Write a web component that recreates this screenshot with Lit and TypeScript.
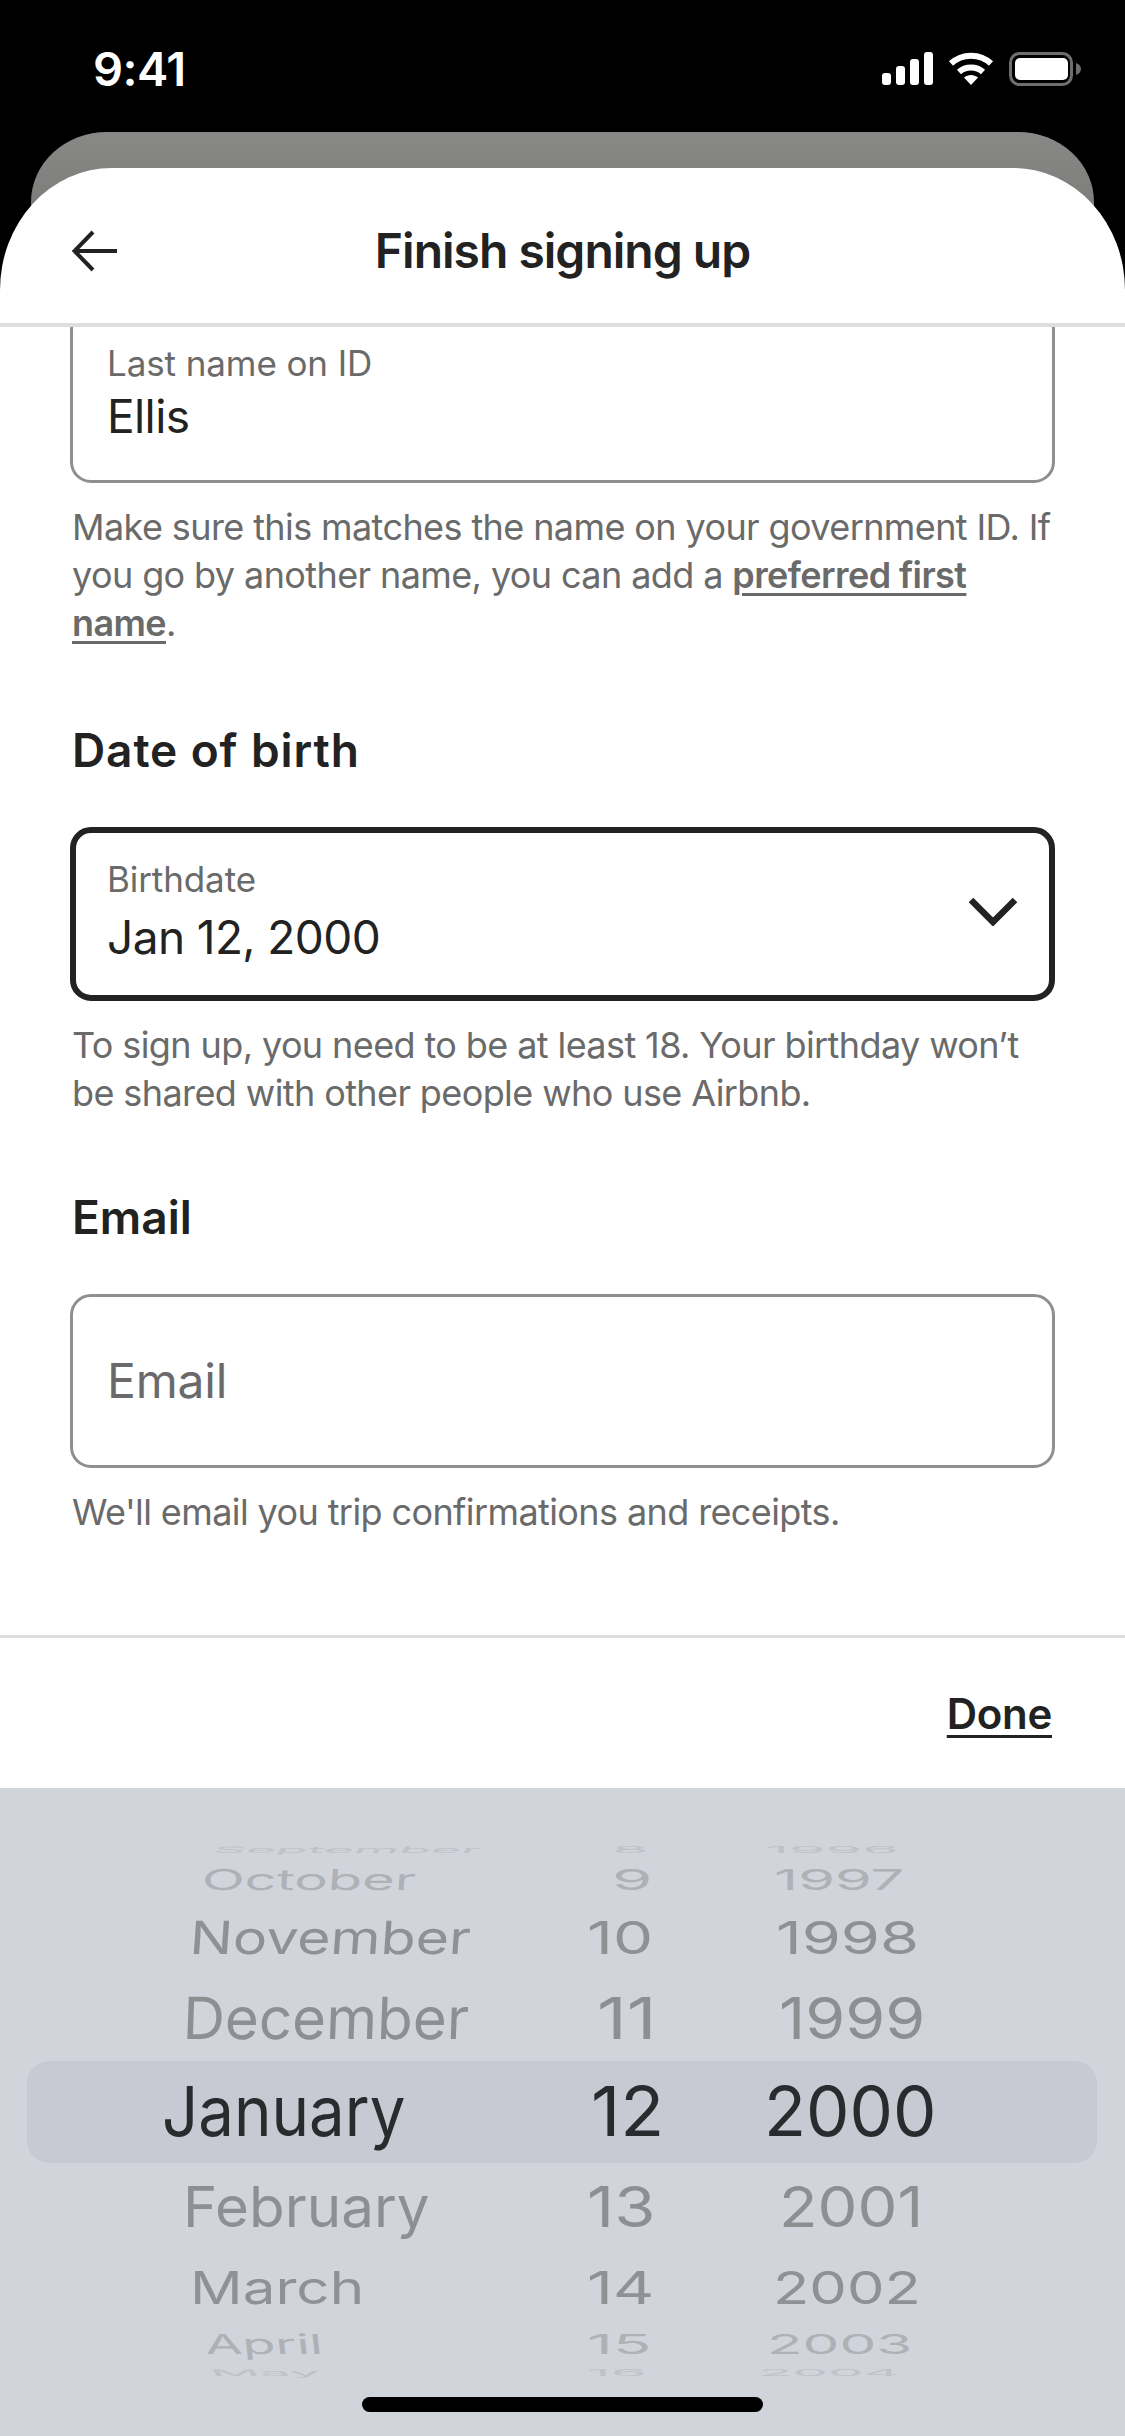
import { LitElement, html, css, svg } from "lit";
import { customElement } from "lit/decorators.js";

type Cell = [string, number, number];
interface Row { h: number; sy: number; skew: number; color: string; cells: Cell[]; }

const COLS = [0, 560, 740];
const ROWS: Row[] = [
  { h: 28, sy: 0.13, skew: -30, color: "#bfc2c8", cells: [["September", 213, 265], ["8", 613, 30], ["1996", 766, 128]] },
  { h: 29, sy: 0.42, skew: -4, color: "#aeb1b6", cells: [["October", 203, 210], ["9", 614, 33], ["1997", 775, 125]] },
  { h: 87, sy: 0.66, skew: -4, color: "#8f9195", cells: [["November", 193, 275], ["10", 588, 60], ["1998", 777, 137]] },
  { h: 76, sy: 0.84, skew: -2, color: "#8d8f93", cells: [["December", 186, 280], ["11", 598, 50], ["1999", 780, 140]] },
  { h: 110, sy: 1, skew: 0, color: "#2a2b2f", cells: [["January", 163, 239], ["12", 592, 66], ["2000", 767, 164]] },
  { h: 79, sy: 0.82, skew: 0, color: "#8d8f93", cells: [["February", 186, 240], ["13", 588, 62], ["2001", 782, 134]] },
  { h: 83, sy: 0.66, skew: 0, color: "#8f9195", cells: [["March", 193, 165], ["14", 588, 61], ["2002", 775, 140]] },
  { h: 32, sy: 0.4, skew: 6, color: "#aeb1b6", cells: [["April", 204, 113], ["15", 588, 58], ["2003", 769, 138]] },
  { h: 26, sy: 0.13, skew: 30, color: "#bfc2c8", cells: [["May", 213, 104], ["16", 588, 54], ["2004", 760, 135]] },
];

const ctx = document.createElement("canvas").getContext("2d")!;
function ink(t: string) {
  ctx.font = '400 69px Inter';
  const m = ctx.measureText(t);
  return { left: m.actualBoundingBoxLeft, width: m.actualBoundingBoxLeft + m.actualBoundingBoxRight };
}

@customElement("app-root")
export class AppRoot extends LitElement {
  static styles = css`
    :host { display: flex; flex-direction: column; width: 1125px; height: 2436px; background: #000; overflow: hidden;
      font-family: Inter, "Liberation Sans", sans-serif; color: #222; }
    .status { height: 132px; flex: none; display: flex; justify-content: space-between; align-items: flex-start; padding: 42px 44px 0 93px; box-sizing: border-box; }
    .time { color: #fff; font-size: 47px; font-weight: 600; line-height: 54px; letter-spacing: -0.5px; }
    .status-icons { display: flex; gap: 15px; padding-top: 10px; align-items: flex-start; }
    .status-icons svg { display: block; }
    .back { flex: none; height: 80px; margin: 0 31px -44px; border-radius: 76px 76px 0 0 / 70px 70px 0 0; background: linear-gradient(#888887, #7c7c7b); }
    .sheet { flex: 1; min-height: 0; display: flex; flex-direction: column; background: #fff; border-radius: 112px 112px 0 0 / 122px 122px 0 0; position: relative; }
    .header { flex: none; height: 155px; box-sizing: content-box; border-bottom: 4px solid #dedede; display: flex; align-items: center; justify-content: center; position: relative; }
    .title { font-size: 48px; font-weight: 600; letter-spacing: -1px; line-height: 56px; margin-top: 10px; }
    .arrow { position: absolute; left: 72px; top: 62px; display: block; }
    .body { flex: 1; min-height: 0; overflow: hidden; padding: 0 70px; display: flex; flex-direction: column; }
    .field { flex: none; height: 174px; box-sizing: border-box; border: 3px solid #8f8f8f; border-radius: 21px; padding: 0 34px; display: flex; flex-direction: column; position: relative; }
    .field.clip { margin-top: -18px; }
    .field.focus { border: 6px solid #222; padding: 0 31px; }
    .label { font-size: 35px; line-height: 40px; color: #6a6a6a; margin-top: 31px; letter-spacing: -0.1px; }
    .focus .label { margin-top: 26px; }
    .value { font-size: 46px; line-height: 56px; color: #222; margin-top: 5px; letter-spacing: -0.6px; }
    .focus .value { margin-top: 10px; }
    .placeholder { font-size: 48px; line-height: 167px; color: #6a6a6a; letter-spacing: -0.2px; }
    .chev { position: absolute; right: 31px; top: 63px; display: block; }
    .help { font-size: 36px; line-height: 48px; color: #6a6a6a; margin: 20px 0 0 2px; letter-spacing: -0.6px; }
    .help a { color: #6a6a6a; font-weight: 600; text-decoration: underline; text-underline-offset: 5px; text-decoration-thickness: 3px; }
    .heading { font-size: 46px; font-weight: 600; line-height: 56px; margin: 75px 0 49px 2px; letter-spacing: 0.9px; color: #222; }
    .heading.tight { margin: 72px 0 49px 2px; letter-spacing: 0; }
    .footer { flex: none; height: 153px; border-top: 3px solid #dedede; display: flex; justify-content: flex-end; align-items: center; padding: 0 73px 0 0; box-sizing: border-box; background: #fff; }
    .done { font-size: 42px; font-weight: 600; letter-spacing: -0.3px; text-decoration: underline; text-underline-offset: 6px; text-decoration-thickness: 3px; color: #222; }
    .picker { flex: none; height: 648px; background: #d1d4db; box-sizing: border-box; padding-top: 48px; position: relative; display: flex; flex-direction: column; }
    .band { position: absolute; left: 27px; width: 1070px; top: 273px; height: 102px; border-radius: 22px; background: #c7cad2; }
    .row { display: grid; grid-template-columns: 560px 180px 1fr; align-items: center; position: relative; flex: none; }
    .cell { height: 0; line-height: 0; font-size: 69px; white-space: nowrap; display: block; transform-origin: 0 0; width: max-content; }
    .home { flex: none; align-self: center; width: 401px; height: 15px; margin-top: 11px; background: #000; border-radius: 8px; position: relative; }
  `;

  private wheel() {
    return ROWS.map(r => html`<div class="row" style="height:${r.h}px">
      ${r.cells.map((c, i) => {
        const m = ink(c[0]);
        const sx = c[2] / m.width;
        const skew = i === 0 ? r.skew : 0;
        return html`<span class="cell" style="color:${r.color};margin-left:${c[1] - COLS[i] + 2 + m.left * sx}px;transform:skewX(${skew}deg) scale(${sx},${r.sy})">${c[0]}</span>`;
      })}
    </div>`);
  }

  render() {
    return html`
      <div class="status">
        <div class="time">9:41</div>
        <div class="status-icons">
          <svg width="51" height="33" viewBox="0 0 51 33" fill="#fff">
            <rect x="0" y="21" width="9" height="12" rx="3"/><rect x="14" y="14" width="9" height="19" rx="3"/>
            <rect x="28" y="7" width="9" height="26" rx="3"/><rect x="42" y="0" width="9" height="33" rx="3"/>
          </svg>
          <svg width="46" height="33" viewBox="0 0 46 33" fill="none" stroke="#fff" stroke-width="6">
            ${svg`<path d="M3 11.5C14 1 32 1 43 11.5"/><path d="M11 20C17.5 14 28.5 14 35 20"/><path d="M16 25.5C20 22 26 22 30 25.5L23 33Z" fill="#fff" stroke="none"/>`}
          </svg>
          <svg width="72" height="34" viewBox="0 0 72 34">
            <rect x="1.5" y="1.5" width="61" height="31" rx="9" fill="none" stroke="#6e6e6e" stroke-width="3"/>
            <rect x="6" y="6" width="53" height="22" rx="5" fill="#fff"/>
            <path d="M67 11C70 12 72 14 72 17S70 22 67 23Z" fill="#6e6e6e"/>
          </svg>
        </div>
      </div>
      <div class="back"></div>
      <div class="sheet">
        <div class="header">
          <svg class="arrow" width="46" height="42" viewBox="0 0 46 42" fill="none" stroke="#222" stroke-width="4">
            <path d="M45 21H3M21 2L2.500 21L21 40"/>
          </svg>
          <div class="title">Finish signing up</div>
        </div>
        <div class="body">
          <div class="field clip">
            <div class="label">Last name on ID</div>
            <div class="value">Ellis</div>
          </div>
          <div class="help">Make sure this matches the name on your government ID. If you go by another name, you can add a <a>preferred first</a> <a>name</a>.</div>
          <div class="heading">Date of birth</div>
          <div class="field focus">
            <div class="label">Birthdate</div>
            <div class="value">Jan 12, 2000</div>
            <svg class="chev" width="50" height="30" viewBox="0 0 50 30" fill="none" stroke="#222" stroke-width="6.500">
              <path d="M3 4L25 26L47 4"/>
            </svg>
          </div>
          <div class="help">To sign up, you need to be at least 18. Your birthday won’t be shared with other people who use Airbnb.</div>
          <div class="heading tight">Email</div>
          <div class="field"><div class="placeholder">Email</div></div>
          <div class="help">We'll email you trip confirmations and receipts.</div>
        </div>
        <div class="footer"><div class="done">Done</div></div>
        <div class="picker">
          <div class="band"></div>
          ${this.wheel()}
          <div class="home"></div>
        </div>
      </div>
    `;
  }
}
